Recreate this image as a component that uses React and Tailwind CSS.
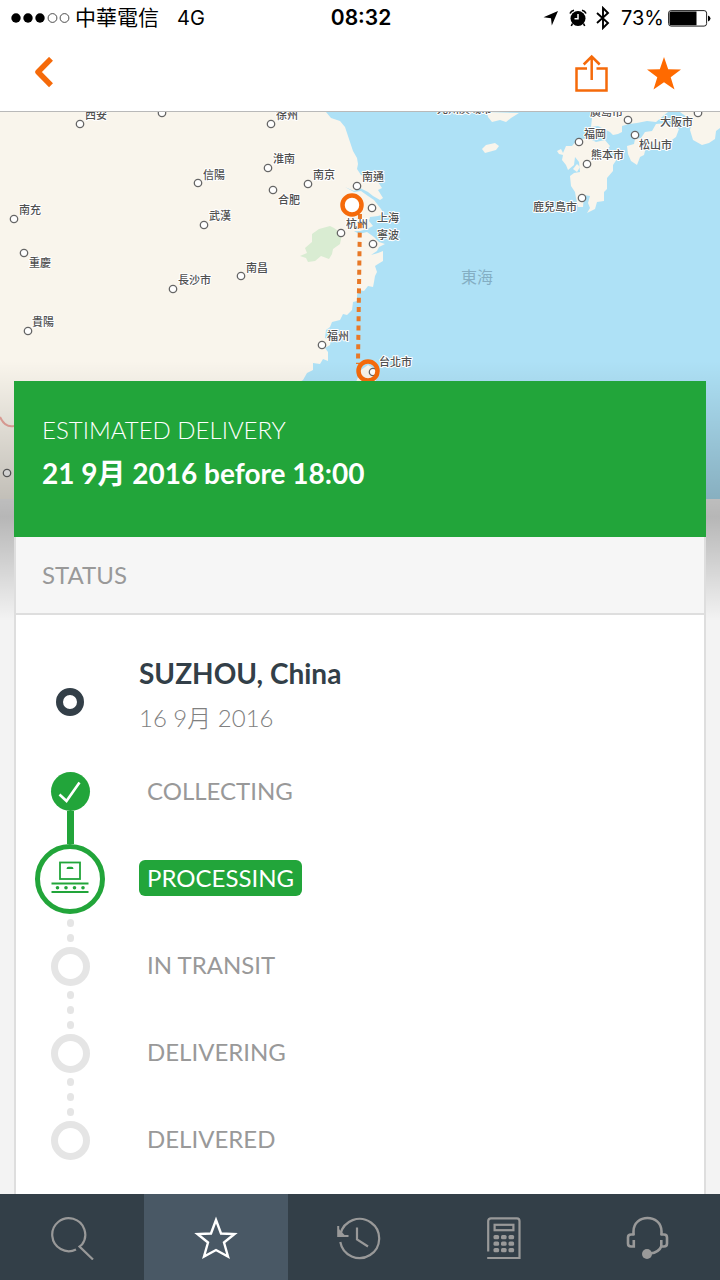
const ORANGE = '#f56a0a';

const CITIES = [
    { name: '西安', x: 85, y: 7, dot: [80, 12] },
    { name: '徐州', x: 276, y: 7, dot: [271, 12] },
    { name: '淮南', x: 273, y: 51, dot: [268, 56] },
    { name: '南京', x: 313, y: 67, dot: [308, 72] },
    { name: '南通', x: 362, y: 69, dot: [357, 74] },
    { name: '合肥', x: 278, y: 92, dot: [273, 78] },
    { name: '信陽', x: 203, y: 67, dot: [198, 71] },
    { name: '武漢', x: 209, y: 108, dot: [204, 113] },
    { name: '南充', x: 19, y: 102, dot: [14, 107] },
    { name: '重慶', x: 29, y: 155, dot: [24, 141] },
    { name: '長沙市', x: 178, y: 172, dot: [173, 177] },
    { name: '南昌', x: 246, y: 160, dot: [241, 164] },
    { name: '貴陽', x: 32, y: 214, dot: [28, 219] },
    { name: '上海', x: 377, y: 110, dot: [372, 96] },
    { name: '杭州', x: 346, y: 116, dot: [341, 121] },
    { name: '寧波', x: 377, y: 127, dot: [373, 132] },
    { name: '福州', x: 327, y: 228, dot: [322, 233] },
    { name: '台北市', x: 379, y: 254, dot: [373, 260] },
    { name: '光州廣域市', x: 437, y: 1 },
    { name: '福岡', x: 584, y: 26, dot: [579, 30] },
    { name: '熊本市', x: 591, y: 47, dot: [587, 52] },
    { name: '廣島市', x: 590, y: 4, dot: [628, 8] },
    { name: '大阪市', x: 660, y: 14, dot: [698, 1] },
    { name: '松山市', x: 639, y: 37, dot: [635, 23] },
    { name: '鹿兒島市', x: 533, y: 99, dot: [582, 86] },
];

const STEPS = [
    { label: 'COLLECTING', state: 'done' },
    { label: 'PROCESSING', state: 'current' },
    { label: 'IN TRANSIT', state: 'todo' },
    { label: 'DELIVERING', state: 'todo' },
    { label: 'DELIVERED', state: 'todo' },
];

const TABS = [
    { label: 'Search', icon: SearchIcon },
    { label: 'Favourites', icon: StarOutlineIcon, active: true },
    { label: 'History', icon: HistoryIcon },
    { label: 'Calculator', icon: CalculatorIcon },
    { label: 'Support', icon: HeadsetIcon },
];

export default function App() {
    return (
        <div className="flex min-h-screen flex-col bg-[#f3f3f3] font-['Lato','Noto_Sans_CJK_TC',sans-serif]">
            <StatusBar />
            <Header />
            <main className="flex flex-1 flex-col">
                <RouteMap />
                <section className="relative isolate mx-[14px] -mt-[118px] flex flex-1 flex-col before:absolute before:-inset-x-[14px] before:-top-5 before:-z-10 before:h-[260px] before:bg-linear-to-b before:from-transparent before:via-black/25 before:via-60% before:to-transparent">
                    <div className="h-[156px] bg-[#22a53a] px-7 pt-[31px] text-white">
                        <h1 className="text-2xl leading-9 font-light">ESTIMATED DELIVERY</h1>
                        <p className="mt-1 text-[28px] leading-[42px] font-bold">21 9月 2016 before 18:00</p>
                    </div>
                    <div className="flex flex-1 flex-col border-x-2 border-[#dedede] bg-white">
                        <h2 className="border-b-2 border-[#dedede] bg-[#f6f6f6] px-[26px] text-2xl leading-[76px] text-[#999]">STATUS</h2>
                        <Origin />
                        <Timeline />
                    </div>
                </section>
            </main>
            <TabBar />
        </div>
    );
}

function StatusBar() {
    return (
        <div className="grid h-9 grid-cols-[1fr_auto_1fr] items-center bg-white pr-[9px] pl-[11px] font-['Inter','Noto_Sans_CJK_TC',sans-serif] text-xl leading-9 text-black">
            <div className="flex items-center">
                <svg width="60" height="10" viewBox="0 0 60 10" className="mr-1">
                    <circle cx="5" cy="5" r="4.7" />
                    <circle cx="17" cy="5" r="4.7" />
                    <circle cx="29" cy="5" r="4.7" />
                    <circle cx="41.500" cy="5" r="4.400" fill="none" stroke="#222" strokeWidth="0.8" />
                    <circle cx="53.500" cy="5" r="4.400" fill="none" stroke="#222" strokeWidth="0.8" />
                </svg>
                <span className="text-[21px]">中華電信</span>
                <span className="ml-[18px]">4G</span>
            </div>
            <span className="text-[21px] font-semibold">08:32</span>
            <div className="flex items-center justify-end">
                <svg width="16" height="16" viewBox="0 0 16 16" className="mr-2.5">
                    <path d="M15 1 L0.500 7.200 L8 8.200 L8.800 15.500 Z" />
                </svg>
                <svg width="18" height="18" viewBox="0 0 18 18" className="mr-2">
                    <circle cx="9" cy="9.500" r="7.500" />
                    <path d="M1 4.500 Q2 1.800 5 1.200 M17 4.500 Q16 1.800 13 1.200" fill="none" stroke="#000" strokeWidth="1.600" />
                    <path d="M3.500 14.500 L2.300 17 M14.500 14.500 L15.700 17" stroke="#000" strokeWidth="1.600" />
                    <path d="M9 5 V9.800 H5.500" fill="none" stroke="#fff" strokeWidth="1.500" />
                </svg>
                <svg width="16" height="24" viewBox="0 0 16 24" className="mr-2.5">
                    <path d="M2 7 L13 17 L8 22 V2 L13 7 L2 17" fill="none" stroke="#000" strokeWidth="1.900" />
                </svg>
                <span>73%</span>
                <svg width="43" height="18" viewBox="0 0 43 18" className="ml-1">
                    <rect x="0.600" y="1.600" width="38" height="15.500" rx="2.500" fill="none" stroke="#222" strokeWidth="1" />
                    <path d="M3 2.500 H28.500 V16.300 H3 Q1.500 16.300 1.500 15 V4 Q1.500 2.500 3 2.500Z" />
                    <path d="M40 6.500 Q42.500 7.500 42.500 9.500 Q42.500 11.500 40 12.500Z" />
                </svg>
            </div>
        </div>
    );
}

function Header() {
    return (
        <header className="flex h-[76px] items-center justify-between border-b border-[#b9b9b9] bg-white px-8">
            <button type="button" aria-label="Back">
                <svg width="24" height="34" viewBox="0 0 24 34">
                    <path d="M19 1.800 L6 15 L19 28.200" fill="none" stroke={ORANGE} strokeWidth="5.500" strokeLinejoin="round" />
                </svg>
            </button>
            <div className="flex items-center gap-9">
                <button type="button" aria-label="Share">
                    <svg width="36" height="40" viewBox="0 1 36 40" fill="none" stroke={ORANGE} strokeWidth="2.500">
                        <path d="M13 15.500 H2.500 V37.500 H32.500 V15.500 H22.500" />
                        <path d="M17.700 27 V4 M9.700 11.500 L17.700 3.500 L25.700 11.500" />
                    </svg>
                </button>
                <button type="button" aria-label="Remove from favourites" className="mr-1.5">
                    <svg width="36" height="36" viewBox="0 0 36 36">
                        <path d="M18 1 L22.200 13.300 L35 13.500 L24.700 21.300 L28.500 33.500 L18 26.300 L7.500 33.500 L11.300 21.300 L1 13.500 L13.800 13.300 Z" fill="#ff6a00" />
                    </svg>
                </button>
            </div>
        </header>
    );
}

function RouteMap() {
    return (
        <svg viewBox="0 0 720 387" preserveAspectRatio="xMidYMin slice" className="block h-[387px] w-full bg-[#aee1f6]">
            <rect width="720" height="387" fill="#aee1f6" />
            <g fill="#f9f5ec">
                {/* mainland */}
                <path d="M0 0 H326 L331 6 L340 9 L345 15 L347 21 L350 30 L353 39 L357 46 L358 52 L357 57 L361 63 L367 65 L371 70 L378 70 L382 76 L378 78 L383 86 L380 88 L373 84 L368 80 L360 76 L354 79 L345 75 L354 80 L361 79 L368 84 L374 88 L381 97 L384 102 L378 104 L370 105 L369 109 L373 114 L367 117 L360 119 L354 119 L359 122 L367 120 L374 125 L379 130 L385 132 L379 135 L377 139 L371 143 L378 141 L383 139 L383 149 L378 152 L375 154 L377 160 L375 164 L374 170 L373 175 L368 174 L364 179 L359 178 L357 183 L357 189 L353 190 L352 198 L347 203 L343 202 L340 208 L332 210 L330 215 L326 218 L325 226 L331 228 L330 233 L325 236 L328 240 L328 249 L323 247 L320 252 L313 251 L313 258 L307 261 L303 268 L292 275 L280 292 L250 330 L200 387 H0Z" />
                {/* Taiwan */}
                <path d="M361 258 L368 253 L380 260 L376 268 L374 290 L355 320 L348 290 L356 270Z" />
                {/* Kyushu */}
                <path d="M557 39 L561 37 L563 41 L566 34 L572 34 L577 28 L588 26 L596 30 L605 28 L610 34 L607 38 L617 47 L613 53 L613 59 L607 66 L607 77 L604 80 L604 89 L597 90 L595 97 L587 101 L590 96 L588 91 L590 84 L584 83 L583 95 L578 95 L576 86 L575 80 L571 74 L570 64 L574 61 L580 60 L579 50 L575 45 L574 53 L568 58 L566 53 L562 48 L563 43 L559 42Z" />
                {/* Honshu */}
                <path d="M596 0 L592 6 L591 15 L598 14 L604 17 L610 20 L613 23 L618 22 L622 20 L622 14 L629 12 L637 11 L647 9 L656 10 L668 0Z" />
                {/* Shikoku */}
                <path d="M627 34 L634 32 L635 27 L641 26 L645 20 L652 19 L656 12 L667 11 L674 14 L679 17 L676 25 L669 30 L664 35 L652 32 L646 35 L644 43 L640 45 L637 53 L631 49 L628 42Z" />
                <path d="M680 0 L684 3 L692 9 L690 18 L693 28 L702 33 L709 31 L715 27 L716 19 L720 16 V0Z" />
                {/* Jeju */}
                <path d="M482 37 L486 33 L495 31 L499 34 L496 38 L485 41Z" />
                <path d="M487 0 L488 5 L492 10 L500 8 L506 10 L511 6 L519 1Z" />
                <path d="M573 57 L577 52 L580 55 L577 60Z" />
            </g>
            <path d="M300 144 L307 141 L305 136 L312 130 L312 122 L319 117 L330 114 L334 116 L342 122 L340 132 L333 137 L332 142 L329 147 L321 144 L315 149 L308 150 L306 146Z" fill="#d9ecd2" />
            <path d="M0 305 Q5 316 14 314" fill="none" stroke="#eda9a0" strokeWidth="2" />
            <g fontSize="11" fontWeight="500" fill="#505050" stroke="#ffffff" strokeWidth="2" strokeLinejoin="round" paintOrder="stroke">
                {CITIES.map((city) => (
                    <text key={city.name} x={city.x} y={city.y}>{city.name}</text>
                ))}
            </g>
            <text x="461" y="171" fontSize="16" fill="#84aec3">東海</text>
            <path d="M360 102 L358 252" stroke="#e87826" strokeWidth="4" strokeDasharray="5 4.300" />
            <g fill="#fff" stroke="#666" strokeWidth="1.300">
                {CITIES.filter((city) => city.dot).map((city) => (
                    <circle key={city.name} cx={city.dot[0]} cy={city.dot[1]} r="3.700" />
                ))}
                <circle cx="162" cy="1" r="3.700" />
                <circle cx="7" cy="361" r="3.700" />
            </g>
            <circle cx="352" cy="93" r="9.500" fill="#fff" stroke={ORANGE} strokeWidth="4.500" />
            <circle cx="368" cy="259" r="9.500" fill="none" stroke={ORANGE} strokeWidth="4.500" />
        </svg>
    );
}

function Origin() {
    return (
        <div className="flex items-center gap-[34px] px-[19px] pt-[34px]">
            <div className="flex w-[70px] justify-center pt-4">
                <span className="size-7 rounded-full border-7 border-[#333f48]" />
            </div>
            <div>
                <h3 className="text-[28px] leading-[48px] font-bold text-[#333f48]">SUZHOU, China</h3>
                <p className="text-2xl leading-[42px] font-light text-[#808080]">16 9月 2016</p>
            </div>
        </div>
    );
}

function Timeline() {
    return (
        <div className="flex gap-[34px] px-[19px] pt-2">
            <div className="flex w-[70px] flex-col items-center pt-[25px]">
                <span className="flex size-[39px] items-center justify-center rounded-full bg-[#22a53a]">
                    <svg width="26" height="26" viewBox="0 0 26 26">
                        <path d="M2.500 15.500 L9.500 22 L22.500 3.500" fill="none" stroke="#fff" strokeWidth="2.600" />
                    </svg>
                </span>
                <span className="h-[33px] w-[7px] bg-[#22a53a]" />
                <span className="flex size-[70px] items-center justify-center rounded-full border-5 border-[#22a53a] bg-white">
                    <ConveyorIcon />
                </span>
                <Dots count={2} />
                <Ring />
                <Dots count={3} />
                <Ring />
                <Dots count={3} />
                <Ring />
            </div>
            <ol className="text-2xl text-[#999]">
                {STEPS.map((step) => (
                    <li key={step.label} className="flex h-[87px] items-center">
                        <span className={step.state === 'current' ? 'rounded-md bg-[#22a53a] px-2 leading-9 text-white' : 'px-2 leading-9'}>
                            {step.label}
                        </span>
                    </li>
                ))}
            </ol>
        </div>
    );
}

function Ring() {
    return <span className="size-[39px] rounded-full border-7 border-[#e5e5e5]" />;
}

function Dots({ count }) {
    return (
        <span className={count === 2 ? 'flex h-[33px] flex-col items-center justify-center gap-[7px]' : 'flex h-12 flex-col items-center justify-center gap-[7px]'}>
            {Array.from({ length: count }, (_, i) => (
                <span key={i} className="h-2 w-[7px] rounded-full bg-[#e5e5e5]" />
            ))}
        </span>
    );
}

function ConveyorIcon() {
    return (
        <svg width="38" height="36" viewBox="0 0 38 36" fill="none" stroke="#22a53a" strokeWidth="1.800">
            <rect x="9" y="1.500" width="20" height="16.500" />
            <path d="M15.500 8 Q15.500 5.800 17.500 5.800 H20.500 Q22.500 5.800 22.500 8Z" fill="#22a53a" stroke="none" />
            <path d="M0.500 22.500 H37.500 M0.500 31 H37.500" />
            <g fill="#22a53a" stroke="none">
                <circle cx="6.500" cy="26.800" r="1.800" />
                <circle cx="15" cy="26.800" r="1.800" />
                <circle cx="23.500" cy="26.800" r="1.800" />
                <circle cx="32" cy="26.800" r="1.800" />
            </g>
        </svg>
    );
}

function TabBar() {
    return (
        <nav className="sticky bottom-0 z-10 grid h-[86px] grid-cols-5 bg-[#333f48]">
            {TABS.map(({ label, icon: Icon, active }) => (
                <button
                    key={label}
                    type="button"
                    aria-label={label}
                    className={active ? 'flex items-center justify-center bg-[#495865] text-white' : 'flex items-center justify-center text-[#999]'}
                >
                    <Icon />
                </button>
            ))}
        </nav>
    );
}

function TabIcon({ children }) {
    return (
        <svg width="46" height="46" viewBox="0 0 46 46" fill="none" stroke="currentColor" strokeWidth="2.200">
            {children}
        </svg>
    );
}

function SearchIcon() {
    return (
        <TabIcon>
            <path d="M27 36 A16.500 16.500 0 1 1 33 31 L30.500 33 L44 46" transform="translate(0 -0.500)" />
        </TabIcon>
    );
}

function StarOutlineIcon() {
    return (
        <TabIcon>
            <path d="M23 6 L28 19.500 L41.500 20 L31 28.500 L35 42.500 L23 36 L11 42.500 L15 28.500 L4.500 20 L18 19.500Z" strokeWidth="2.400" />
        </TabIcon>
    );
}

function HistoryIcon() {
    return (
        <TabIcon>
            <path d="M3.500 20 A19.600 19.600 0 1 1 3.300 28" />
            <path d="M1.200 12 V22 H11.500" strokeWidth="2" />
            <path d="M1 14 V22.500 H9Z" fill="currentColor" stroke="none" />
            <path d="M20 13.500 V25.500 L31 32.500" />
        </TabIcon>
    );
}

function CalculatorIcon() {
    return (
        <TabIcon>
            <path d="M7.200 37.500 V7 Q7.200 4.300 10 4.300 H36 Q38.500 4.300 38.500 7 V44 H6.200" />
            <rect x="13.600" y="10.800" width="18.800" height="5.400" />
            <g fill="currentColor" stroke="none">
                {[21, 27.500, 34].map((y) => (
                    <g key={y}>
                        <rect x="12.500" y={y} width="5.600" height="4.200" rx="1.500" />
                        <rect x="20" y={y} width="5.600" height="4.200" rx="1.500" />
                        <rect x="27.500" y={y} width="5.600" height="4.200" rx="1.500" />
                    </g>
                ))}
            </g>
        </TabIcon>
    );
}

function HeadsetIcon() {
    return (
        <TabIcon>
            <g strokeWidth="2.600">
                <path d="M8.500 21 V17.500 C8.500 -0.500 36.500 -0.500 36.500 17.500 V21" />
                <path d="M9.500 20.500 H6 Q3 20.500 3 23.500 V29.500 Q3 32.500 6 32.500 H8.800 V26" />
                <path d="M35.500 20.500 H39 Q42 20.500 42 23.500 V29.500 Q42 32.500 39 32.500 H36.300 V26" />
                <path d="M36.500 32 Q34 38.500 25 39.500" />
            </g>
            <circle cx="22" cy="40" r="5" fill="currentColor" stroke="none" />
        </TabIcon>
    );
}
